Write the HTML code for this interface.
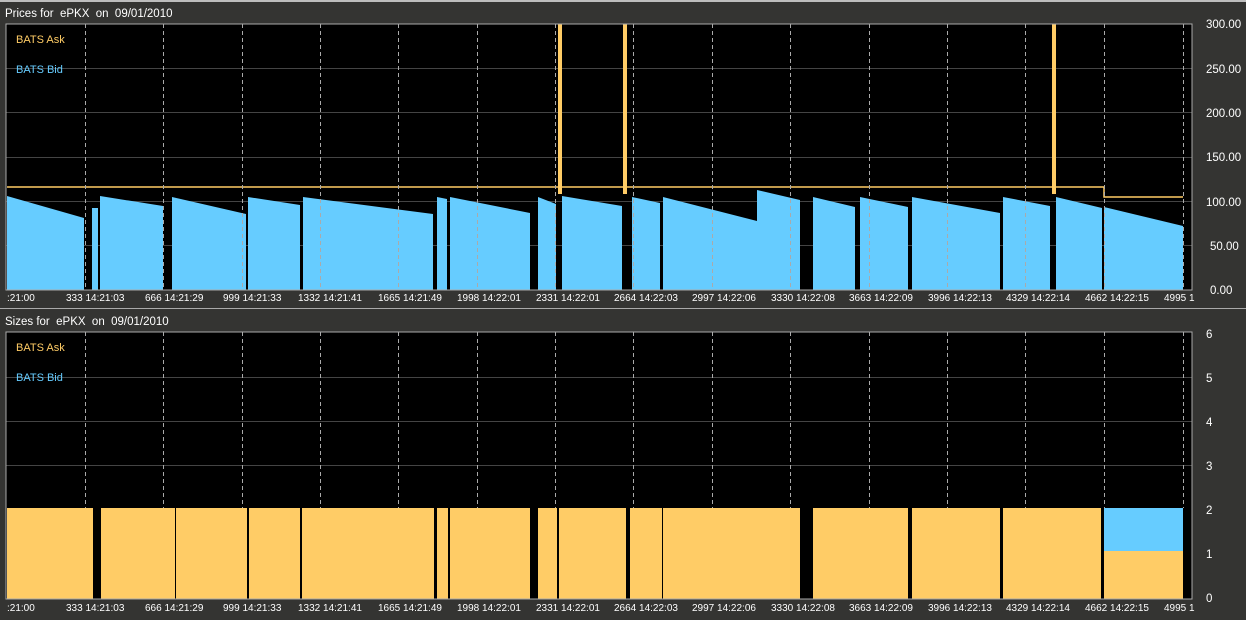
<!DOCTYPE html>
<html><head><style>
html,body{margin:0;padding:0;background:#343432;}
body{width:1246px;height:615px;overflow:hidden;position:relative;font-family:"Liberation Sans",sans-serif;}
</style></head><body>
<svg width="1246" height="615" xmlns="http://www.w3.org/2000/svg" font-family="Liberation Sans, sans-serif" font-size="11">
<rect width="1246" height="615" fill="#343432"/>
<rect x="0" y="0" width="1246" height="2" fill="#bdbdbd"/>
<text x="5" y="17" fill="#fff" font-size="11.5" style="white-space:pre">Prices for  ePKX  on  09/01/2010</text>
<rect x="6" y="24" width="1186" height="266" fill="#000"/>
<g stroke="#444" stroke-width="1">
<line x1="6" y1="245.5" x2="1192" y2="245.5"/><line x1="6" y1="201.5" x2="1192" y2="201.5"/><line x1="6" y1="157.5" x2="1192" y2="157.5"/><line x1="6" y1="112.5" x2="1192" y2="112.5"/><line x1="6" y1="68.5" x2="1192" y2="68.5"/>
</g>
<g fill="#66ccff">
<polygon points="7,290 7,196 84,218 84,290"/>
<polygon points="92,290 92,208 98,208 98,290"/>
<polygon points="100,290 100,196 163,206 163,290"/>
<polygon points="172,290 172,197 246,214 246,290"/>
<polygon points="248,290 248,197 300,205 300,290"/>
<polygon points="303,290 303,197 433,214 433,290"/>
<polygon points="437,290 437,197 447,199 447,290"/>
<polygon points="450,290 450,197 530,213 530,290"/>
<polygon points="538,290 538,197 556,204 556,290"/>
<polygon points="562,290 562,196 622,206 622,290"/>
<polygon points="632,290 632,197 660,203 660,290"/>
<polygon points="663,290 663,197 757,221 757,290"/>
<polygon points="757,290 757,190 800,200 800,290"/>
<polygon points="813,290 813,197 855,207 855,290"/>
<polygon points="860,290 860,197 908,207 908,290"/>
<polygon points="912,290 912,197 1000,213 1000,290"/>
<polygon points="1003,290 1003,197 1050,206 1050,290"/>
<polygon points="1056,290 1056,197 1102,208 1102,290"/>
<polygon points="1104,290 1104,207 1183,226 1183,290"/>
</g>
<g stroke="#ffcc66" fill="none" stroke-width="1.5">
<polyline points="7,187 1104,187 1104,197 1183,197"/>
</g>
<g fill="#ffcc66">
<rect x="558" y="24" width="4" height="170"/><rect x="623" y="24" width="4" height="170"/><rect x="1052" y="24" width="4" height="170"/>
</g>
<g stroke="#aaa" stroke-dasharray="4,3" stroke-width="1">
<line x1="85.5" y1="24" x2="85.5" y2="290"/><line x1="163.5" y1="24" x2="163.5" y2="290"/><line x1="242.5" y1="24" x2="242.5" y2="290"/><line x1="320.5" y1="24" x2="320.5" y2="290"/><line x1="398.5" y1="24" x2="398.5" y2="290"/><line x1="477.5" y1="24" x2="477.5" y2="290"/><line x1="555.5" y1="24" x2="555.5" y2="290"/><line x1="633.5" y1="24" x2="633.5" y2="290"/><line x1="712.5" y1="24" x2="712.5" y2="290"/><line x1="790.5" y1="24" x2="790.5" y2="290"/><line x1="869.5" y1="24" x2="869.5" y2="290"/><line x1="947.5" y1="24" x2="947.5" y2="290"/><line x1="1025.5" y1="24" x2="1025.5" y2="290"/><line x1="1104.5" y1="24" x2="1104.5" y2="290"/><line x1="1183.5" y1="24" x2="1183.5" y2="290"/>
</g>
<rect x="6" y="24" width="1186" height="266" fill="none" stroke="#aaa" stroke-width="1"/>
<text x="16" y="43" fill="#ffcc66">BATS Ask</text>
<text x="16" y="73" fill="#66ccff">BATS Bid</text>
<g fill="#fff" font-size="11.5">
<text x="1206" y="28">300.00</text><text x="1206" y="73">250.00</text><text x="1206" y="117">200.00</text><text x="1206" y="161">150.00</text><text x="1206" y="206">100.00</text><text x="1210" y="250">50.00</text><text x="1210" y="294">0.00</text>
</g>
<g fill="#fff" font-size="10">
<text x="7" y="301">:21:00</text><text x="66" y="301">333 14:21:03</text><text x="145" y="301">666 14:21:29</text><text x="223" y="301">999 14:21:33</text><text x="298" y="301">1332 14:21:41</text><text x="378" y="301">1665 14:21:49</text><text x="457" y="301">1998 14:22:01</text><text x="536" y="301">2331 14:22:01</text><text x="614" y="301">2664 14:22:03</text><text x="692" y="301">2997 14:22:06</text><text x="771" y="301">3330 14:22:08</text><text x="849" y="301">3663 14:22:09</text><text x="928" y="301">3996 14:22:13</text><text x="1006" y="301">4329 14:22:14</text><text x="1085" y="301">4662 14:22:15</text><text x="1164" y="301">4995 1</text>
</g>
<rect x="0" y="308" width="1246" height="1" fill="#aaa"/>
<text x="5" y="325" fill="#fff" font-size="11.5" style="white-space:pre">Sizes for  ePKX  on  09/01/2010</text>
<rect x="6" y="332" width="1186" height="267" fill="#000"/>
<g stroke="#444"><line x1="6" y1="377.5" x2="1192" y2="377.5"/><line x1="6" y1="421.5" x2="1192" y2="421.5"/><line x1="6" y1="465.5" x2="1192" y2="465.5"/></g>
<g stroke="#aaa" stroke-dasharray="4,3">
<line x1="85.5" y1="332" x2="85.5" y2="508"/><line x1="163.5" y1="332" x2="163.5" y2="508"/><line x1="242.5" y1="332" x2="242.5" y2="508"/><line x1="320.5" y1="332" x2="320.5" y2="508"/><line x1="398.5" y1="332" x2="398.5" y2="508"/><line x1="477.5" y1="332" x2="477.5" y2="508"/><line x1="555.5" y1="332" x2="555.5" y2="508"/><line x1="633.5" y1="332" x2="633.5" y2="508"/><line x1="712.5" y1="332" x2="712.5" y2="508"/><line x1="790.5" y1="332" x2="790.5" y2="508"/><line x1="869.5" y1="332" x2="869.5" y2="508"/><line x1="947.5" y1="332" x2="947.5" y2="508"/><line x1="1025.5" y1="332" x2="1025.5" y2="508"/><line x1="1104.5" y1="332" x2="1104.5" y2="508"/><line x1="1183.5" y1="332" x2="1183.5" y2="508"/>
</g>
<rect x="7" y="508" width="1176" height="91" fill="#ffcc66"/>
<g fill="#000">
<rect x="93" y="508" width="8" height="91"/><rect x="175" y="508" width="1" height="91"/><rect x="247" y="508" width="2" height="91"/><rect x="300" y="508" width="2" height="91"/><rect x="434" y="508" width="3" height="91"/><rect x="448" y="508" width="2" height="91"/><rect x="530" y="508" width="8" height="91"/><rect x="557" y="508" width="2" height="91"/><rect x="626" y="508" width="4" height="91"/><rect x="662" y="508" width="1" height="91"/><rect x="800" y="508" width="13" height="91"/><rect x="908" y="508" width="4" height="91"/><rect x="1000" y="508" width="3" height="91"/><rect x="1101" y="508" width="3" height="91"/>
</g>
<rect x="1104" y="508" width="79" height="43" fill="#66ccff"/>
<rect x="6" y="332" width="1186" height="267" fill="none" stroke="#aaa"/>
<text x="16" y="351" fill="#ffcc66">BATS Ask</text>
<text x="16" y="381" fill="#66ccff">BATS Bid</text>
<g fill="#fff" font-size="11.5">
<text x="1206" y="338">6</text><text x="1206" y="382">5</text><text x="1206" y="426">4</text><text x="1206" y="470">3</text><text x="1206" y="514">2</text><text x="1206" y="558">1</text><text x="1206" y="602">0</text>
</g>
<g fill="#fff" font-size="10">
<text x="7" y="611">:21:00</text><text x="66" y="611">333 14:21:03</text><text x="145" y="611">666 14:21:29</text><text x="223" y="611">999 14:21:33</text><text x="298" y="611">1332 14:21:41</text><text x="378" y="611">1665 14:21:49</text><text x="457" y="611">1998 14:22:01</text><text x="536" y="611">2331 14:22:01</text><text x="614" y="611">2664 14:22:03</text><text x="692" y="611">2997 14:22:06</text><text x="771" y="611">3330 14:22:08</text><text x="849" y="611">3663 14:22:09</text><text x="928" y="611">3996 14:22:13</text><text x="1006" y="611">4329 14:22:14</text><text x="1085" y="611">4662 14:22:15</text><text x="1164" y="611">4995 1</text>
</g>
</svg>
</body></html>
